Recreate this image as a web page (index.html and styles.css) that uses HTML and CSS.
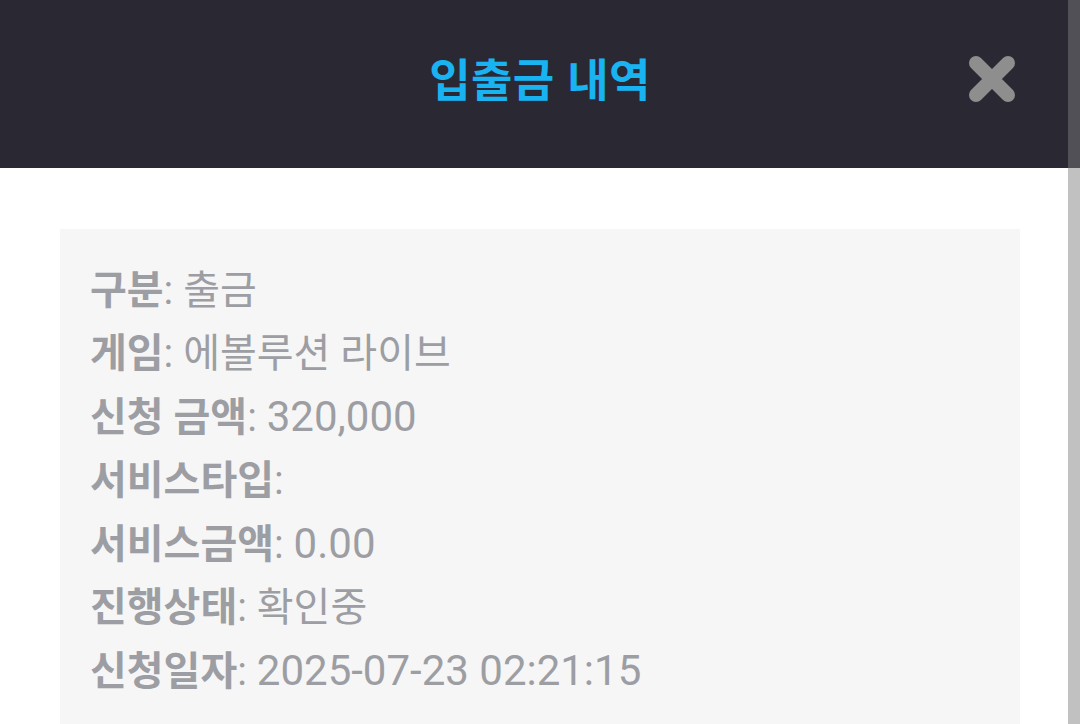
FILE: index.html
```html
<!DOCTYPE html>
<html lang="ko">
<head>
<meta charset="utf-8">
<link rel="stylesheet" href="styles.css">
</head>
<body>
<div class="page">
  <div class="main">
    <header class="header">
      <h1 class="title">입출금 내역</h1>
      <button class="close" aria-label="닫기">
        <svg width="48" height="48" viewBox="0 0 48 48">
          <path d="M8 8 L40 40 M40 8 L8 40" stroke="#8e8e8e" stroke-width="14" stroke-linecap="round" fill="none"/>
        </svg>
      </button>
    </header>
    <section class="card">
      <div class="row"><span class="label">구분</span>: 출금</div>
      <div class="row"><span class="label">게임</span>: 에볼루션 라이브</div>
      <div class="row"><span class="label">신청 금액</span>: <span class="num">320,000</span></div>
      <div class="row"><span class="label">서비스타입</span>:</div>
      <div class="row"><span class="label">서비스금액</span>: <span class="num">0.00</span></div>
      <div class="row"><span class="label">진행상태</span>: 확인중</div>
      <div class="row"><span class="label">신청일자</span>: <span class="num">2025-07-23 02:21:15</span></div>
    </section>
  </div>
  <div class="scrollbar">
    <div class="sb-top"></div>
    <div class="sb-thumb"></div>
  </div>
</div>
</body>
</html>
```

FILE: styles.css
```css
html, body {
  margin: 0;
  padding: 0;
  height: 100%;
  overflow: hidden;
  background: #ffffff;
}
.page {
  display: flex;
  height: 724px;
  font-family: Roboto, "Noto Sans CJK KR", sans-serif;
}
.main {
  flex: 1;
  display: flex;
  flex-direction: column;
}
.header {
  height: 168px;
  background: #2a2933;
  display: flex;
  align-items: center;
  justify-content: center;
  padding-left: 12px;
  position: relative;
  flex-shrink: 0;
}
.title {
  margin: 0 0 14px 0;
  color: #19b3f2;
  font-size: 45px;
  font-weight: 700;
  font-family: "Noto Sans CJK KR", sans-serif;
  letter-spacing: 0.3px;
}
.close {
  position: absolute;
  right: 52px;
  top: 55px;
  width: 48px;
  height: 48px;
  padding: 0;
  border: 0;
  background: none;
}
.close svg { display: block; }
.card {
  margin: 61px 48px 0 60px;
  background: #f6f6f6;
  padding: 30px 30px 40px 30px;
  flex: 1;
  color: #9d9ea3;
  font-size: 40px;
  line-height: 63px;
}
.label {
  font-weight: 700;
}
.num {
  font-size: 42px;
}
.scrollbar {
  width: 12px;
  display: flex;
  flex-direction: column;
}
.sb-top {
  height: 168px;
  background: #505056;
}
.sb-thumb {
  flex: 1;
  background: #c1c1c1;
}
```
